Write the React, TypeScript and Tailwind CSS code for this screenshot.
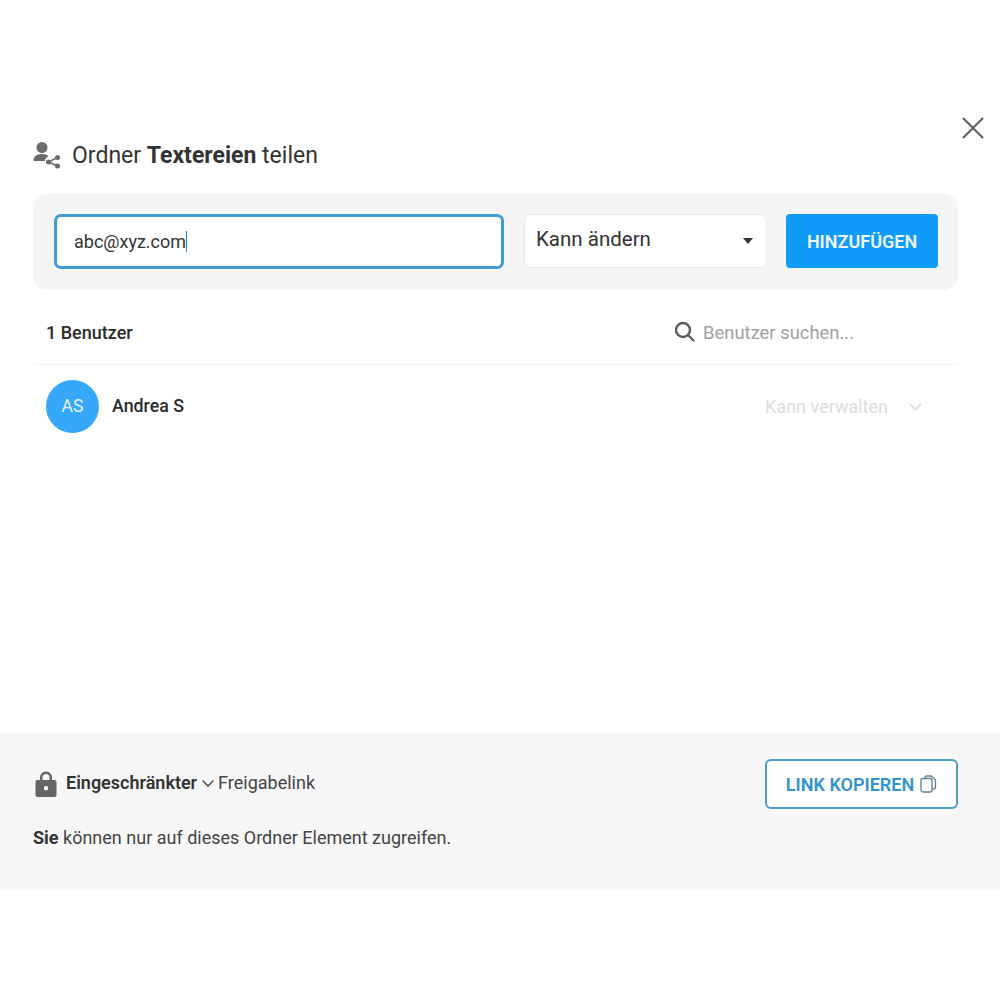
function ShareUserIcon() {
  return (
    <svg width="28" height="28" viewBox="0 0 28 28" fill="#6b6b6b">
      <circle cx="9" cy="6.5" r="5.5" />
      <path d="M0.5 19c0-4 4.5-6 8.5-6 2.5 0 5 .7 6.500 2l-2.500 2.200c-.6.5-1 1.300-1 2.300l0 .5H1.500c-.6 0-1-.4-1-1z" />
      <circle cx="24.500" cy="16.500" r="2.500" />
      <circle cx="15.500" cy="21" r="2.500" />
      <circle cx="24.500" cy="25" r="2.500" />
      <path d="M15.500 21l9-4.500M15.500 21l9 4" stroke="#6b6b6b" strokeWidth="1.500" fill="none" />
    </svg>
  )
}

function CloseIcon() {
  return (
    <svg width="22" height="22" viewBox="0 0 22 22" stroke="#5f5f5f" strokeWidth="2" fill="none">
      <path d="M1 1l20 20M21 1L1 21" />
    </svg>
  )
}

function SearchIcon() {
  return (
    <svg width="21" height="21" viewBox="0 0 21 21" stroke="#5c5c5c" strokeWidth="2.400" fill="none">
      <circle cx="9" cy="9" r="7" />
      <path d="M14 14l5.500 5.500" strokeLinecap="round" />
    </svg>
  )
}

function Chevron({ color, size }: { color: string; size: number }) {
  return (
    <svg width={size} height={size * 0.6} viewBox="0 0 10 6" stroke={color} strokeWidth="1.100" fill="none">
      <path d="M0.500 0.500L5 5l4.500-4.500" />
    </svg>
  )
}

function LockIcon() {
  return (
    <svg width="22" height="26" viewBox="0 0 22 26" fill="#656565">
      <path
        fillRule="evenodd"
        d="M5 9V6.500a6 6 0 0 1 12 0V9h2.500c1.200 0 2 .8 2 2v13c0 1.200-.8 2-2 2h-17c-1.200 0-2-.8-2-2V11c0-1.200.8-2 2-2zm2.500 0h7V6.500a3.500 3.500 0 0 0-7 0zM11 15a2.200 2.200 0 1 0 0 4.400A2.200 2.200 0 0 0 11 15z"
      />
    </svg>
  )
}

function CopyIcon() {
  return (
    <svg width="17" height="18" viewBox="0 0 17 18" stroke="#5d7f94" strokeWidth="1.300" fill="none">
      <path d="M5 3.500V2.500C5 1.500 5.700 1 6.500 1H11l4.500 4v7.500c0 .9-.7 1.500-1.500 1.500h-1.500" />
      <rect x="1" y="3.500" width="11" height="13.500" rx="2" />
    </svg>
  )
}

export default function App() {
  return (
    <div className="w-[1000px] h-[1000px] bg-white flex flex-col font-['Roboto',sans-serif] text-[#2b2b2b]">
      <div className="h-[117px] shrink-0" />
      <div className="flex justify-end pr-4 h-[20px]">
        <CloseIcon />
      </div>

      <div className="ml-[33px] mr-[42px] flex items-center mt-[1px] h-[34px] gap-[11px]">
        <ShareUserIcon />
        <h1 className="text-[23px] leading-none text-[#333]">
          Ordner <span className="font-bold">Textereien</span> teilen
        </h1>
      </div>

      <div className="ml-[33px] mr-[42px] mt-[22px] h-[96px] bg-[#f5f5f5] rounded-[14px] flex items-center pl-[21px] pb-[2px]">
        <div className="w-[450px] h-[55px] shrink-0 bg-white border-[3px] border-[#3f9bd6] rounded-[7px] flex items-center pl-[17px] pt-[1px] text-[18px] text-[#333]">
          abc@xyz.com
          <span className="w-px h-[21px] bg-[#2b7fb8]" />
        </div>
        <div className="ml-5 w-[243px] h-[54px] shrink-0 bg-white border border-[#e8e8e8] rounded-[7px] flex items-center justify-between pl-[11px] pr-[13px]">
          <span className="text-[20.500px] text-[#333] pb-[3px]">Kann ändern</span>
          <span className="w-0 h-0 border-x-[5.500px] border-x-transparent border-t-[6px] border-t-[#333]" />
        </div>
        <button className="ml-[19px] w-[152px] h-[54px] shrink-0 bg-[#0f9bf7] rounded-[4px] text-[#eef8ff] font-semibold text-[18px]">
          HINZUFÜGEN
        </button>
      </div>

      <div className="ml-[33px] mr-[42px] h-[75px] border-b border-[#f3f3f3] flex items-center justify-between pl-[13px] pr-[104px] pt-[10px]">
        <span className="text-[18px] font-medium">1 Benutzer</span>
        <div className="flex items-center gap-[8px]">
          <SearchIcon />
          <span className="text-[18.400px] text-[#a0a0a0] pt-[1px]">Benutzer suchen...</span>
        </div>
      </div>

      <div className="ml-[33px] mr-[42px] pt-[15px] pl-[13px] pr-[36px] flex items-center">
        <div className="w-[53px] h-[53px] rounded-full bg-[#35a8fb] flex items-center justify-center text-[#e8f5ff] text-[17.500px]">
          AS
        </div>
        <span className="ml-[13px] text-[17.800px] font-medium">Andrea S</span>
        <div className="ml-auto flex items-center gap-[21px]">
          <span className="text-[18px] text-[#dcdcdc]">Kann verwalten</span>
          <Chevron color="#d8d8d8" size={13} />
        </div>
      </div>

      <div className="flex-1" />

      <div className="h-[157px] bg-[#f7f7f7] pl-[33px] pr-[42px] pt-[26px] mb-[110px]">
        <div className="flex items-center justify-between h-[50px]">
          <div className="flex items-center text-[18px] pl-[2px] leading-[26px]">
            <LockIcon />
            <span className="ml-[9px] font-semibold text-[#333] pb-[2px]">Eingeschränkter</span>
            <span className="ml-[5px]">
              <Chevron color="#333" size={12} />
            </span>
            <span className="ml-[4px] text-[#444] pb-[2px]">Freigabelink</span>
          </div>
          <button className="w-[193px] h-[50px] border-2 border-[#4a9fd0] rounded-[6px] bg-white flex items-center justify-center gap-[6px] text-[#2f93cf] font-semibold text-[18px]">
            LINK KOPIEREN
            <CopyIcon />
          </button>
        </div>
        <p className="mt-[15px] text-[18px] text-[#444]">
          <span className="font-bold text-[#333]">Sie</span> können nur auf dieses Ordner Element zugreifen.
        </p>
      </div>
    </div>
  )
}
